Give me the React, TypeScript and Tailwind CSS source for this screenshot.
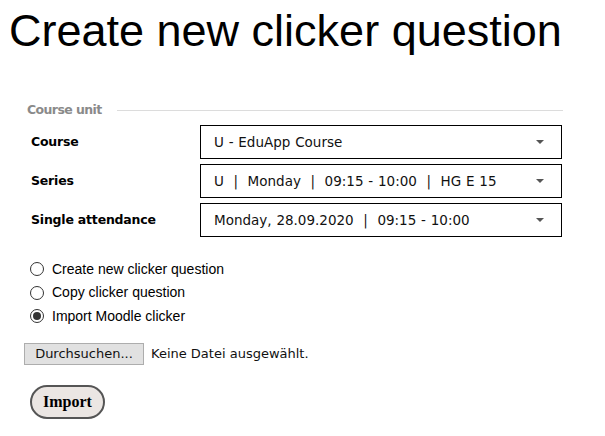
import React from 'react';

const rows = [
  { label: 'Course', value: 'U - EduApp Course' },
  { label: 'Series', value: 'U  |  Monday  |  09:15 - 10:00  |  HG E 15' },
  { label: 'Single attendance', value: 'Monday, 28.09.2020  |  09:15 - 10:00' },
];

const options = [
  { label: 'Create new clicker question', checked: false },
  { label: 'Copy clicker question', checked: false },
  { label: 'Import Moodle clicker', checked: true },
];

const Arrow = () => (
  <svg width="10" height="6" viewBox="0 0 10 6" className="shrink-0">
    <path d="M1 1h8L5 5z" fill="#555" />
  </svg>
);

export default function App() {
  return (
    <div className="w-[605px] h-[436px] bg-white overflow-hidden text-black">
      <h1 className="pl-[9px] pt-[8px] text-[45px] leading-[46px] font-['Liberation_Sans',Arial,sans-serif]">
        Create new clicker question
      </h1>

      <div className="mt-[50px] ml-[27px] w-[536px]">
        <div className="flex items-center gap-[15px] h-[12px]">
          <span className="text-[12.5px] font-bold tracking-[-0.6px] text-[#8a8a8a] font-['DejaVu_Sans',sans-serif]">
            Course unit
          </span>
          <div className="flex-1 h-px bg-[#dcdcdc]" />
        </div>

        <div className="mt-[9px] flex flex-col gap-[5px]">
          {rows.map((r) => (
            <div key={r.label} className="flex items-center">
              <span className="w-[173px] pl-[4px] text-[12.5px] font-bold tracking-[-0.2px] font-['DejaVu_Sans',sans-serif]">
                {r.label}
              </span>
              <div className="w-[362px] h-[34px] border border-black flex items-center justify-between pl-[13px] pr-[16px]">
                <span className="text-[13.5px] whitespace-pre [word-spacing:0.5px] text-[#111] font-['DejaVu_Sans',sans-serif]">
                  {r.value}
                </span>
                <Arrow />
              </div>
            </div>
          ))}
        </div>
      </div>

      <div className="mt-[24px] ml-[30px] flex flex-col gap-[7.5px] font-['Liberation_Sans',Arial,sans-serif] text-[14px]">
        {options.map((o) => (
          <label key={o.label} className="flex items-center gap-[8px] h-[16px]">
            <span className="w-[14px] h-[14px] rounded-full border border-[#333] bg-white flex items-center justify-center">
              {o.checked && <span className="w-[8px] h-[8px] rounded-full bg-[#333]" />}
            </span>
            <span>{o.label}</span>
          </label>
        ))}
      </div>

      <div className="mt-[19px] ml-[24px] flex items-center gap-[7px] text-[13px] font-['DejaVu_Sans',sans-serif]">
        <button className="h-[22px] w-[120px] bg-[#e1e1e1] border border-[#adadad] text-[#111]">
          Durchsuchen...
        </button>
        <span className="text-[#111]">Keine Datei ausgewählt.</span>
      </div>

      <button className="mt-[20px] ml-[30px] w-[75px] h-[34px] rounded-full border-2 border-[#555] bg-[#ebe6e3] text-[16px] font-bold font-['Liberation_Serif',serif]">
        Import
      </button>
    </div>
  );
}
